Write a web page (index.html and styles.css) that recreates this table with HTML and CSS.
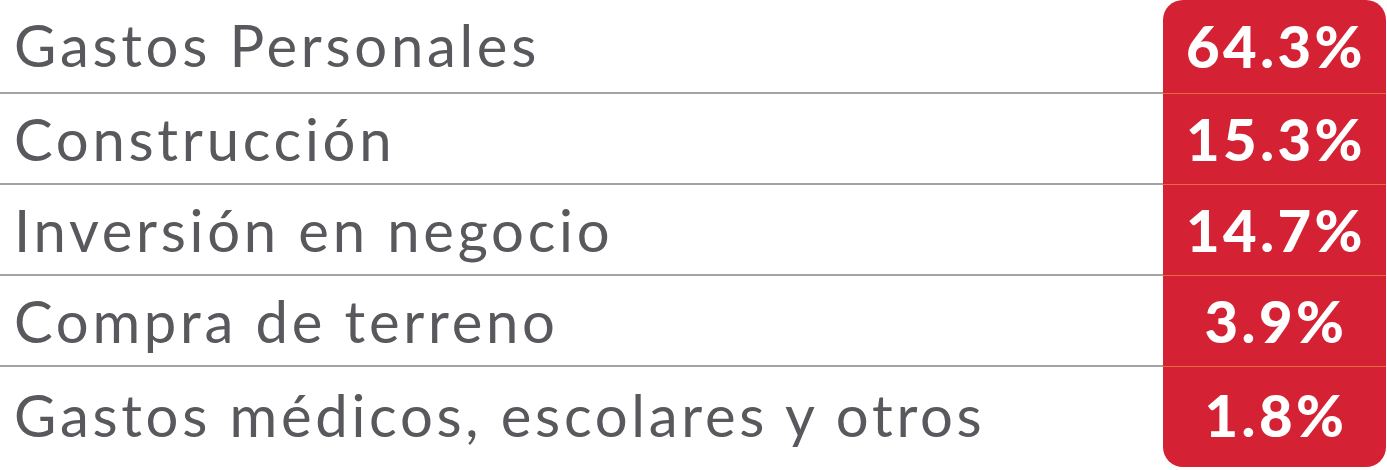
FILE: index.html
```html
<!DOCTYPE html>
<html lang="es">
<head>
<meta charset="utf-8">
<title>Uso del dinero</title>
<link rel="stylesheet" href="styles.css">
</head>
<body>
<div class="table">
  <div class="row row-first">
    <div class="label">Gastos Personales</div>
    <div class="value">64.3%</div>
  </div>
  <div class="row">
    <div class="label">Construcción</div>
    <div class="value">15.3%</div>
  </div>
  <div class="row">
    <div class="label">Inversión en negocio</div>
    <div class="value">14.7%</div>
  </div>
  <div class="row">
    <div class="label">Compra de terreno</div>
    <div class="value">3.9%</div>
  </div>
  <div class="row row-last">
    <div class="label">Gastos médicos, escolares y otros</div>
    <div class="value">1.8%</div>
  </div>
</div>
</body>
</html>
```

FILE: styles.css
```css
html, body {
  margin: 0;
  padding: 0;
  background: #ffffff;
}

.table {
  display: flex;
  flex-direction: column;
  width: 1386px;
}

.row {
  display: flex;
  height: 91px;
}

.row-first {
  height: 94px;
}

.row-last {
  height: 103px;
}

.label {
  flex: 1;
  padding-left: 14px;
  font-family: "Lato", "Liberation Sans", sans-serif;
  font-size: 58px;
  letter-spacing: 3.7px;
  line-height: 90px;
  color: #58585d;
  border-bottom: 2px solid #a3a3a3;
}

.value {
  width: 223px;
  box-sizing: border-box;
  padding-left: 3px;
  text-align: center;
  font-family: "Lato", "Liberation Sans", sans-serif;
  font-weight: 900;
  font-size: 58px;
  letter-spacing: 3.5px;
  line-height: 90px;
  color: #ffffff;
  background: #d42234;
  border-bottom: 1px solid #e66a3c;
}

.row-last .label,
.row-last .value {
  border-bottom: none;
  line-height: 96px;
}

.row-first .value {
  border-radius: 20px 20px 0 0;
  line-height: 92px;
}

.row-last .value {
  border-radius: 0 0 20px 20px;
  height: 100px;
}
```
